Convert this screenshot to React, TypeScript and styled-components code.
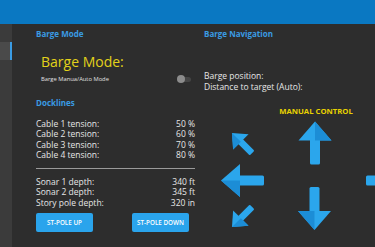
import React from "react";
import styled, { createGlobalStyle } from "styled-components";

const GlobalStyle = createGlobalStyle`
  html, body {
    margin: 0;
    padding: 0;
    background: #2d2d2d;
    overflow: hidden;
  }
  body {
    font-family: "Open Sans", "Noto Sans", sans-serif;
    color: #e8e8e8;
  }
`;

const Page = styled.div`
  width: 375px;
  height: 247px;
  display: flex;
  flex-direction: column;
  overflow: hidden;
`;

const TopBar = styled.div`
  height: 24px;
  flex-shrink: 0;
  background: #0a78c2;
`;

const Body = styled.div`
  flex: 1;
  display: flex;
  min-height: 0;
`;

const Sidebar = styled.div`
  width: 12px;
  flex-shrink: 0;
  background: #3b3b3b;
  padding-top: 18px;
`;

const SideItem = styled.div<{ $active?: boolean }>`
  height: 18px;
  background: ${(p) => (p.$active ? "#4a4a4a" : "transparent")};
  border-right: 2px solid ${(p) => (p.$active ? "#3a9be3" : "transparent")};
  box-sizing: border-box;
`;

const Main = styled.div`
  flex: 1;
  display: flex;
  gap: 9px;
  padding-left: 24px;
  min-width: 0;
`;

const LeftCol = styled.div`
  width: 159px;
  flex-shrink: 0;
  display: flex;
  flex-direction: column;
`;

const RightCol = styled.div`
  flex: 1;
  display: flex;
  flex-direction: column;
  min-width: 0;
`;

const SectionTitle = styled.div<{ $top: number }>`
  margin-top: ${(p) => p.$top}px;
  font-size: 8px;
  line-height: 10px;
  font-weight: 700;
  color: #3a9be3;
`;

const ModeBlock = styled.div`
  padding-left: 5px;
  display: flex;
  flex-direction: column;
`;

const BigTitle = styled.div`
  margin-top: 14px;
  font-size: 14px;
  line-height: 18px;
  color: #e3d21a;
`;

const ToggleRow = styled.div`
  margin-top: 3px;
  display: flex;
  align-items: center;
  justify-content: space-between;
  height: 10px;
  padding-right: 4px;
`;

const SmallLabel = styled.span`
  font-size: 5.8px;
  color: #e0e0e0;
`;

const Toggle = styled.div`
  position: relative;
  width: 14px;
  height: 5px;
  border-radius: 3px;
  background: #454545;
`;

const Knob = styled.div`
  position: absolute;
  left: 0;
  top: -1.5px;
  width: 8px;
  height: 8px;
  border-radius: 50%;
  background: #8c8c8c;
`;

const DataList = styled.div<{ $top: number }>`
  margin-top: ${(p) => p.$top}px;
  display: flex;
  flex-direction: column;
`;

const DataRow = styled.div`
  display: flex;
  justify-content: space-between;
  font-size: 8.5px;
  line-height: 10.3px;
  color: #e6e6e6;
`;

const Divider = styled.div`
  margin-top: 8px;
  height: 1px;
  background: #9a9a9a;
`;

const ButtonRow = styled.div`
  margin-top: 5px;
  display: flex;
  justify-content: space-between;
  padding-right: 6px;
`;

const PoleButton = styled.button`
  width: 57px;
  height: 19px;
  border: none;
  border-radius: 2px;
  background: #2aa4ec;
  color: #ffffff;
  font-family: "Open Sans", "Noto Sans", sans-serif;
  font-size: 6.3px;
  font-weight: 600;
  padding: 0;
  text-transform: uppercase;
`;

const NavInfo = styled.div`
  margin-top: 31px;
  display: flex;
  flex-direction: column;
  font-size: 8.5px;
  line-height: 11px;
  color: #e6e6e6;
`;

const ManualTitle = styled.div`
  margin-top: 14px;
  width: 220px;
  text-align: center;
  font-size: 7.7px;
  line-height: 10px;
  font-weight: 700;
  color: #e8d200;
  padding-left: 2px;
`;

const ArrowPad = styled.div`
  margin-top: 14px;
  padding-left: 17px;
  display: flex;
  gap: 35px;
`;

const ArrowColumn = styled.div<{ $w: number }>`
  width: ${(p) => p.$w}px;
  flex-shrink: 0;
  height: 100px;
  display: flex;
  flex-direction: column;
  justify-content: space-between;
  align-items: center;
`;

const ArrowSvg = styled.svg`
  display: block;
  flex-shrink: 0;
  overflow: visible;
`;

const LIGHT = "#2ba6ec";
const DARK = "#1c8dd6";

type Dir = "up" | "down" | "left" | "right" | "ul" | "ur" | "dl" | "dr";

const angle: Record<Dir, number> = {
  up: 0,
  right: 90,
  down: 180,
  left: 270,
  ur: 45,
  dr: 135,
  dl: 225,
  ul: 315,
};

// shading falls on the lower / right side, so left-pointing arrows shade the other half
const shadeLeft: Record<Dir, boolean> = {
  up: false,
  right: false,
  down: false,
  left: true,
  ur: false,
  dr: false,
  dl: true,
  ul: true,
};

const Arrow = ({ dir, size = 1 }: { dir: Dir; size?: number }) => {
  const diag = dir.length === 2;
  const vertical = dir === "up" || dir === "down";
  const w = diag ? 26 : vertical ? 33 : 43;
  const h = diag ? 26 : vertical ? 43 : 33;
  const shade = shadeLeft[dir] ? "16.5,0 0,19 16.5,19" : "16.5,0 33,19 16.5,19";
  return (
    <ArrowSvg width={w} height={h} viewBox={`${-w / 2} ${-h / 2} ${w} ${h}`}>
      <g transform={`rotate(${angle[dir]}) scale(${size}) translate(-16.5 -21.5)`}>
        <rect x="11.5" y="17" width="10" height="26" rx="1.5" fill={LIGHT} />
        <polygon points="16.5,0 33,19 0,19" fill={LIGHT} />
        <polygon points={shade} fill={DARK} />
      </g>
    </ArrowSvg>
  );
};

const cables = [
  ["Cable 1 tension:", "50 %"],
  ["Cable 2 tension:", "60 %"],
  ["Cable 3 tension:", "70 %"],
  ["Cable 4 tension:", "80 %"],
];

const depths = [
  ["Sonar 1 depth:", "340 ft"],
  ["Sonar 2 depth:", "345 ft"],
  ["Story pole depth:", "320 in"],
];

export default function App() {
  return (
    <Page>
      <GlobalStyle />
      <TopBar />
      <Body>
        <Sidebar>
          <SideItem $active />
        </Sidebar>
        <Main>
          <LeftCol>
            <SectionTitle $top={5}>Barge Mode</SectionTitle>
            <ModeBlock>
              <BigTitle>Barge Mode:</BigTitle>
              <ToggleRow>
                <SmallLabel>Barge Manua/Auto Mode</SmallLabel>
                <Toggle>
                  <Knob />
                </Toggle>
              </ToggleRow>
            </ModeBlock>
            <SectionTitle $top={14}>Docklines</SectionTitle>
            <DataList $top={11}>
              {cables.map(([k, v]) => (
                <DataRow key={k}>
                  <span>{k}</span>
                  <span>{v}</span>
                </DataRow>
              ))}
            </DataList>
            <Divider />
            <DataList $top={8}>
              {depths.map(([k, v]) => (
                <DataRow key={k}>
                  <span>{k}</span>
                  <span>{v}</span>
                </DataRow>
              ))}
            </DataList>
            <ButtonRow>
              <PoleButton>ST-POLE UP</PoleButton>
              <PoleButton>ST-POLE DOWN</PoleButton>
            </ButtonRow>
          </LeftCol>
          <RightCol>
            <SectionTitle $top={5}>Barge Navigation</SectionTitle>
            <NavInfo>
              <span>Barge position:</span>
              <span>Distance to target (Auto):</span>
            </NavInfo>
            <ManualTitle>MANUAL CONTROL</ManualTitle>
            <ArrowPad>
              <ArrowColumn $w={42}>
                <Arrow dir="ul" size={0.66} />
                <Arrow dir="left" />
                <Arrow dir="dl" size={0.66} />
              </ArrowColumn>
              <ArrowColumn $w={33}>
                <Arrow dir="up" />
                <Arrow dir="down" />
              </ArrowColumn>
              <ArrowColumn $w={42}>
                <Arrow dir="ur" size={0.66} />
                <Arrow dir="right" />
                <Arrow dir="dr" size={0.66} />
              </ArrowColumn>
            </ArrowPad>
          </RightCol>
        </Main>
      </Body>
    </Page>
  );
}
